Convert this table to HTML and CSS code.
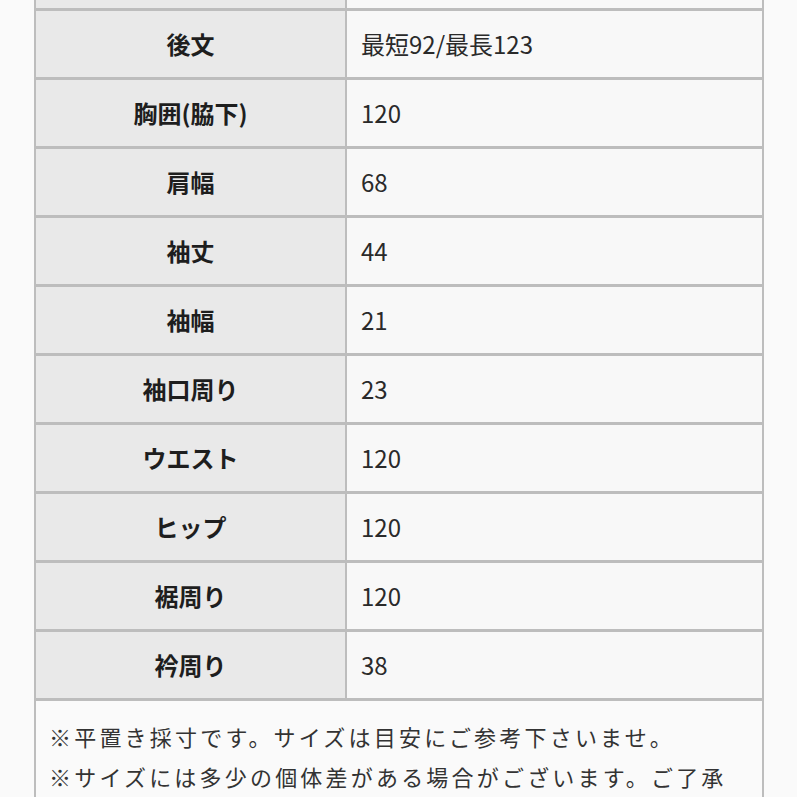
FILE: index.html
```html
<!DOCTYPE html>
<html lang="ja">
<head>
<meta charset="utf-8">
<link rel="stylesheet" href="styles.css">
</head>
<body>
<table class="size-table">
  <tr class="cut-row"><th></th><td></td></tr>
  <tr><th>後文</th><td>最短92/最長123</td></tr>
  <tr><th>胸囲(脇下)</th><td>120</td></tr>
  <tr><th>肩幅</th><td>68</td></tr>
  <tr><th>袖丈</th><td>44</td></tr>
  <tr><th>袖幅</th><td>21</td></tr>
  <tr><th>袖口周り</th><td>23</td></tr>
  <tr><th>ウエスト</th><td>120</td></tr>
  <tr><th>ヒップ</th><td>120</td></tr>
  <tr><th>裾周り</th><td>120</td></tr>
  <tr><th>衿周り</th><td>38</td></tr>
  <tr class="note-row"><td colspan="2">
    <p>※平置き採寸です。サイズは目安にご参考下さいませ。</p>
    <p>※サイズには多少の個体差がある場合がございます。ご了承</p>
  </td></tr>
</table>
</body>
</html>
```
FILE: styles.css
```css
html, body {
  margin: 0;
  padding: 0;
  background: #fafafa;
}
body {
  font-family: "Noto Sans CJK JP", "Noto Sans", sans-serif;
  color: #222;
  overflow: hidden;
  height: 797px;
}
.size-table {
  border-collapse: collapse;
  margin-left: 34px;
  width: 730px;
  table-layout: fixed;
}
.size-table th,
.size-table td {
  border: 2px solid #bdbdbd;
  height: 69px;
  padding: 0;
  box-sizing: border-box;
  font-size: 24px;
  line-height: 1;
}
.size-table th {
  width: 311px;
  background: #e9e9e9;
  font-weight: bold;
  text-align: center;
  color: #1e1e1e;
  border-top-width: 3px;
}
.size-table td {
  background: #f8f8f8;
  text-align: left;
  padding-left: 14px;
  font-weight: normal;
  color: #2a2a2a;
}
.size-table tr td {
  border-top-width: 3px;
}
.size-table .cut-row th,
.size-table .cut-row td {
  height: 9px;
  border-top: none;
}
.size-table .note-row td {
  height: auto;
  padding: 24px 0 0 13px;
  background: #fafafa;
  vertical-align: top;
  border-bottom: none;
}
.note-row p {
  margin: 0 0 17px;
  font-size: 22px;
  letter-spacing: 3.2px;
  color: #333;
  line-height: 23px;
  white-space: nowrap;
}
```
